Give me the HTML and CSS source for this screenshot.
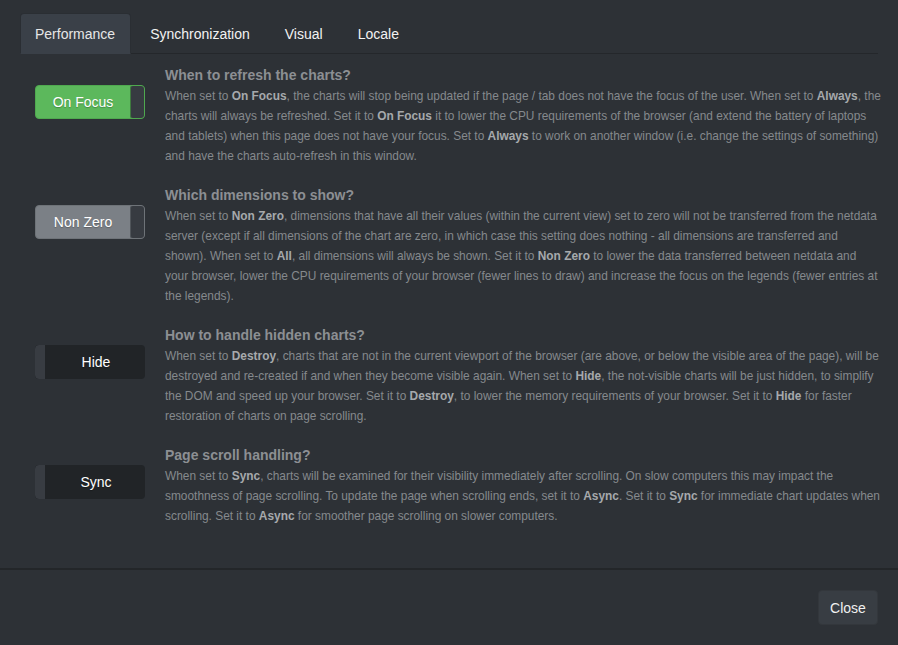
FILE: index.html
```html
<!DOCTYPE html>
<html>
<head>
<meta charset="utf-8">
<link rel="stylesheet" href="styles.css">
</head>
<body>
<div class="modal">
  <div class="modal-body">
    <ul class="tabs">
      <li class="tab active">Performance</li>
      <li class="tab">Synchronization</li>
      <li class="tab">Visual</li>
      <li class="tab">Locale</li>
    </ul>
    <div class="tab-content">
      <div class="row">
        <div class="toggle on"><span class="label">On Focus</span><span class="handle"></span></div>
        <div class="text">
          <h4>When to refresh the charts?</h4>
          <p>When set to <b>On Focus</b>, the charts will stop being updated if the page / tab does not have the focus of the user. When set to <b>Always</b>, the charts will always be refreshed. Set it to <b>On Focus</b> it to lower the CPU requirements of the browser (and extend the battery of laptops and tablets) when this page does not have your focus. Set to <b>Always</b> to work on another window (i.e. change the settings of something) and have the charts auto-refresh in this window.</p>
        </div>
      </div>
      <div class="row">
        <div class="toggle grey"><span class="label">Non Zero</span><span class="handle"></span></div>
        <div class="text">
          <h4>Which dimensions to show?</h4>
          <p>When set to <b>Non Zero</b>, dimensions that have all their values (within the current view) set to zero will not be transferred from the netdata server (except if all dimensions of the chart are zero, in which case this setting does nothing - all dimensions are transferred and shown). When set to <b>All</b>, all dimensions will always be shown. Set it to <b>Non Zero</b> to lower the data transferred between netdata and your browser, lower the CPU requirements of your browser (fewer lines to draw) and increase the focus on the legends (fewer entries at the legends).</p>
        </div>
      </div>
      <div class="row">
        <div class="toggle off"><span class="handle"></span><span class="label">Hide</span></div>
        <div class="text">
          <h4>How to handle hidden charts?</h4>
          <p>When set to <b>Destroy</b>, charts that are not in the current viewport of the browser (are above, or below the visible area of the page), will be destroyed and re-created if and when they become visible again. When set to <b>Hide</b>, the not-visible charts will be just hidden, to simplify the DOM and speed up your browser. Set it to <b>Destroy</b>, to lower the memory requirements of your browser. Set it to <b>Hide</b> for faster restoration of charts on page scrolling.</p>
        </div>
      </div>
      <div class="row">
        <div class="toggle off"><span class="handle"></span><span class="label">Sync</span></div>
        <div class="text">
          <h4>Page scroll handling?</h4>
          <p>When set to <b>Sync</b>, charts will be examined for their visibility immediately after scrolling. On slow computers this may impact the smoothness of page scrolling. To update the page when scrolling ends, set it to <b>Async</b>. Set it to <b>Sync</b> for immediate chart updates when scrolling. Set it to <b>Async</b> for smoother page scrolling on slower computers.</p>
        </div>
      </div>
    </div>
  </div>
  <div class="modal-footer">
    <button class="btn">Close</button>
  </div>
</div>
</body>
</html>
```

FILE: styles.css
```css
html, body {
  margin: 0;
  padding: 0;
  background: #2d3136;
}
body {
  font-family: "Liberation Sans", Arial, sans-serif;
  color: #c8c8c8;
}
.modal {
  height: 645px;
  display: flex;
  flex-direction: column;
  background: #2d3136;
}
.modal-body {
  flex: 1;
  padding: 13px 20px 0 20px;
}
.tabs {
  list-style: none;
  margin: 0;
  padding: 0;
  display: flex;
  border-bottom: 1px solid #24272b;
}
.tab {
  font-size: 14px;
  line-height: 20px;
  padding: 10px 15px 9px 14px;
  margin-right: 4px;
  margin-bottom: -1px;
  color: #f2f2f2;
  border: 1px solid transparent;
  border-radius: 4px 4px 0 0;
}
.tab.active {
  background: #3a4048;
  border-color: #2a2e33 #2a2e33 #3a4048;
  color: #e6e6e6;
}
.tab-content {
  padding-top: 11px;
}
.row {
  display: flex;
  gap: 20px;
  padding-left: 15px;
  margin-bottom: 19px;
}
.toggle {
  flex: 0 0 110px;
  height: 34px;
  margin-top: 20px;
  display: flex;
  border-radius: 4px;
  overflow: hidden;
  box-sizing: border-box;
}
.toggle .label {
  flex: 1;
  display: flex;
  align-items: center;
  justify-content: center;
  font-size: 14px;
  color: #fff;
  text-shadow: 0 1px 1px rgba(0,0,0,0.25);
}
.toggle .handle {
  flex: 0 0 13px;
  background: #373b41;
  border: 1px solid #2e3237;
}
.toggle.on { background: #5cb85c; border: 1px solid #4fa94f; }
.toggle.on .handle { border-radius: 3px; border-color: #3e7a3e; margin: -1px -1px -1px 0; }
.toggle.grey { background: #7b8086; border: 1px solid #6e7378; }
.toggle.grey .handle { border-radius: 3px; border-color: #50555a; margin: -1px -1px -1px 0; }
.toggle.off { background: #212427; }
.toggle.off .handle { flex-basis: 10px; background: #383c42; border: none; border-radius: 4px 0 0 4px; }
.toggle.off .label { padding-left: 2px; }
.text {
  flex: 1;
  margin-right: -4px;
}
.text h4 {
  margin: 0;
  font-size: 14px;
  line-height: 21px;
  font-weight: bold;
  color: #8c8f93;
}
.text p {
  margin: 0;
  font-size: 11.9px;
  line-height: 20px;
  color: #85898d;
}
.text p b {
  color: #a6a9ac;
}
.modal-footer {
  border-top: 2px solid #232629;
  padding: 20px 20px 20px;
  display: flex;
  justify-content: flex-end;
}
.btn {
  font-family: "Liberation Sans", Arial, sans-serif;
  font-size: 14px;
  height: 35px;
  width: 60px;
  padding: 0;
  color: #f0f0f0;
  background: #383d43;
  border: 1px solid #33373c;
  border-radius: 4px;
}
```
